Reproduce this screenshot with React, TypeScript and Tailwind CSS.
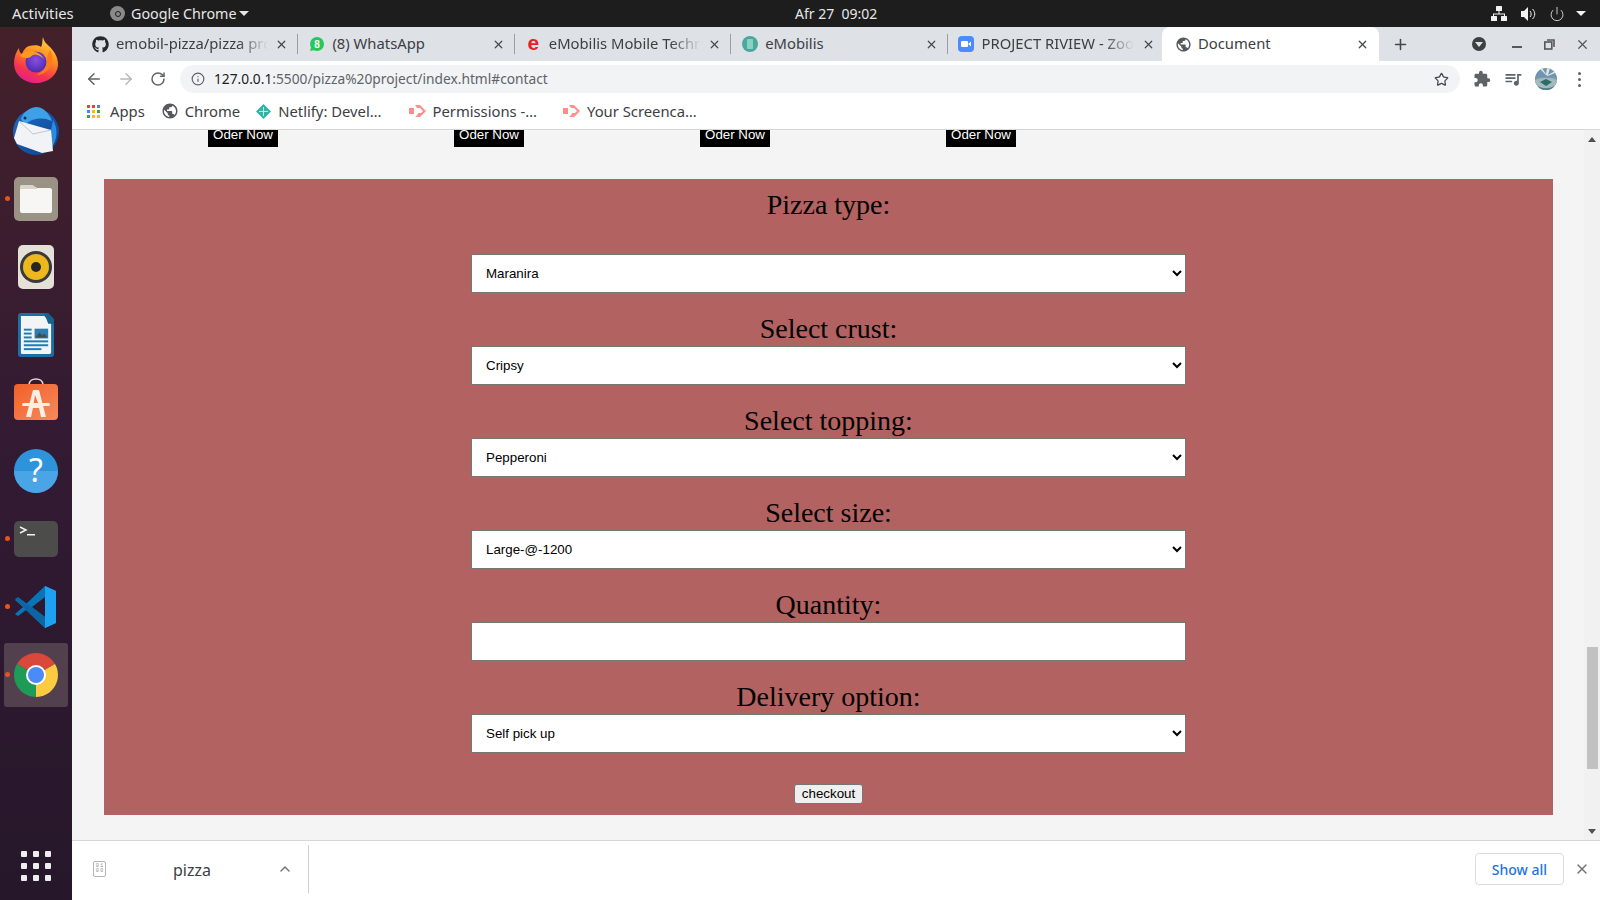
import { ArrowLeft, ArrowRight, RotateCw, Info, Star, Plus, X, ChevronUp, Power } from "lucide-react";
import { FaGithub } from "react-icons/fa";
import { MdExtension, MdPublic, MdQueueMusic } from "react-icons/md";

const ui = "font-['Noto_Sans',sans-serif]";

function FirefoxIcon() {
  return (
    <svg className="-mt-[7px]" width="46" height="48" viewBox="0 0 46 48">
      <defs>
        <linearGradient id="ff" x1="0.7" y1="0" x2="0.3" y2="1">
          <stop offset="0" stopColor="#ffd53d" />
          <stop offset="0.4" stopColor="#ff8a1f" />
          <stop offset="0.75" stopColor="#f5344f" />
          <stop offset="1" stopColor="#e01e8e" />
        </linearGradient>
        <radialGradient id="ffg" cx="0.5" cy="0.4" r="0.6">
          <stop offset="0" stopColor="#8a4fe0" />
          <stop offset="1" stopColor="#4b2bb0" />
        </radialGradient>
      </defs>
      <path d="M30 1c1 5 3 6 7 10 5 5 8 11 8 17 0 11-10 19-22 19S1 39 1 27c0-6 2-11 5-15 0 3 1 5 3 6 1-4 4-7 7-8 5-1 10-1 12 1 2-3 1-7 2-10z" fill="url(#ff)" />
      <circle cx="23" cy="26" r="10.5" fill="url(#ffg)" />
      <path d="M7 20c3-4 8-6 12-5 6 1 10 4 12 8-3-3-7-5-11-4-2 1-3 3-6 3-3 0-5-1-7-2z" fill="#ff9a1f" />
      <path d="M37 14c3 5 3 12 0 17-3 5-8 8-14 8 7-3 11-8 11-14 0-4 1-8 3-11z" fill="#ff7a1a" />
    </svg>
  );
}

function ThunderbirdIcon() {
  return (
    <svg width="48" height="50" viewBox="0 0 48 50">
      <defs>
        <linearGradient id="tb" x1="0" y1="0" x2="1" y2="1">
          <stop offset="0" stopColor="#1f6fc4" />
          <stop offset="1" stopColor="#0a3f8f" />
        </linearGradient>
      </defs>
      <circle cx="24" cy="26" r="23" fill="url(#tb)" />
      <path d="M24 1c-8 1-13 6-15 12l4 6c5-6 16-9 27-4C37 7 31 1 24 1z" fill="#3fa0e8" />
      <path d="M41 14c5 8 5 20-2 28l-7 3c5-7 7-20 9-31z" fill="#2c8adf" />
      <path d="M2 32 7 15 39 24 41 45 30 47 5 38z" fill="#f2f3f6" />
      <path d="M7 15 21 28 39 24" fill="none" stroke="#c3c6cf" strokeWidth="1" />
      <circle cx="13" cy="12" r="1.5" fill="#0d2d5c" />
    </svg>
  );
}

function FilesIcon() {
  return (
    <svg width="44" height="44" viewBox="0 0 44 44">
      <rect width="44" height="44" rx="5" fill="#9a9284" />
      <path d="M6 10c0-1 1-2 2-2h10l5 3h13c1 0 2 1 2 2v21c0 1-1 2-2 2H8c-1 0-2-1-2-2z" fill="#f7f6f4" />
      <path d="M6 13V10c0-1 1-2 2-2h10l5 3 0 1H9c-2 0-3 0-3 1z" fill="#d9d5cd" />
    </svg>
  );
}

function RhythmboxIcon() {
  return (
    <svg width="44" height="44" viewBox="0 0 44 44">
      <rect x="4" y="0" width="36" height="44" rx="5" fill="#e4e1d8" />
      <circle cx="22" cy="22" r="16" fill="#3a3a3a" />
      <circle cx="22" cy="22" r="13" fill="#ecb81e" />
      <circle cx="22" cy="22" r="5" fill="#262626" />
    </svg>
  );
}

function WriterIcon() {
  return (
    <svg width="37" height="45" viewBox="0 0 38 46">
      <path d="M3 0h25l9 9v33c0 2-1 3-3 3H3c-2 0-3-1-3-3V3c0-2 1-3 3-3z" fill="#1b6fa5" />
      <path d="M4 3h23l7 8v29c0 1 0 2-2 2H4c-1 0-1-1-1-2V4c0-1 0-1 1-1z" fill="#f3f4f6" />
      <path d="M27 0h4l6 6v5h-6z" fill="#15628f" />
      <rect x="6" y="16" width="8" height="2" fill="#1b7db8" />
      <rect x="6" y="20" width="8" height="2" fill="#1b7db8" />
      <rect x="6" y="24" width="8" height="2" fill="#1b7db8" />
      <rect x="17" y="16" width="14" height="10" fill="#2a7fb0" />
      <path d="M18 25l4-5 3 3 2-2 3 4z" fill="#4a4a4a" />
      <rect x="6" y="28" width="25" height="2" fill="#1b7db8" />
      <rect x="6" y="32" width="25" height="2" fill="#1b7db8" />
      <rect x="6" y="36" width="18" height="2" fill="#1b7db8" />
    </svg>
  );
}

function StoreIcon() {
  return (
    <svg className="-mt-[8px]" width="44" height="42" viewBox="0 0 44 42">
      <defs>
        <linearGradient id="st" x1="0" y1="0" x2="1" y2="1">
          <stop offset="0" stopColor="#f2602a" />
          <stop offset="1" stopColor="#f58a5c" />
        </linearGradient>
      </defs>
      <path d="M15 7c0-8 14-8 14 0" fill="none" stroke="#eed9c4" strokeWidth="1.6" />
      <rect y="6" width="44" height="36" rx="4" fill="url(#st)" />
      <path d="M19 12h6l7 27h-5l-2-9h-6l-2 9h-5zM21 17l-1.500 9h5z" fill="#fbeee6" />
      <rect x="8" y="25" width="28" height="3" rx="1.500" fill="#fbeee6" />
    </svg>
  );
}

function HelpIcon() {
  return (
    <svg width="44" height="44" viewBox="0 0 44 44">
      <circle cx="22" cy="22" r="22" fill="#2f93dc" />
      <path d="M0 22h44a22 22 0 0 1-44 0z" fill="#4aa5e6" />
      <text x="22" y="33" textAnchor="middle" fontSize="32" fontFamily="Noto Sans, sans-serif" fill="#fff">?</text>
    </svg>
  );
}

function TerminalIcon() {
  return (
    <svg width="44" height="36" viewBox="0 0 44 36">
      <rect width="44" height="36" rx="5" fill="#4c4c4a" />
      <path d="M6 6l6 3-6 3" fill="none" stroke="#f2f2f2" strokeWidth="1.500" />
      <rect x="13" y="13" width="8" height="1.500" fill="#f2f2f2" />
    </svg>
  );
}

function VSCodeIcon() {
  return (
    <svg width="44" height="44" viewBox="0 0 44 44">
      <path d="M31 1 42 6v32l-11 5-19-18-8 6-3-2 8-7-8-7 3-2 8 6z" fill="#0a74b8" />
      <path d="M31 1 42 6v32l-11 5z" fill="#1ea1f1" />
      <path d="M31 12v20l-13-10z" fill="#2d1a2f" />
      <path d="M1 14l3-2 27 20v11L12 25z" fill="#0c66a6" />
    </svg>
  );
}

function ChromeIcon({ size = 44 }: { size?: number }) {
  return (
    <svg width={size} height={size} viewBox="0 0 44 44">
      <path d="M22 22 3 11A22 22 0 0 1 41 11z" fill="#d9483b" />
      <path d="M22 22 41 11A22 22 0 0 1 22 44z" fill="#fdcb42" />
      <path d="M22 22 22 44A22 22 0 0 1 3 11z" fill="#1e9c57" />
      <circle cx="22" cy="22" r="10" fill="#fff" />
      <circle cx="22" cy="22" r="8" fill="#4a8bf5" />
    </svg>
  );
}

function ScreencastIcon() {
  return (
    <svg width="17" height="14" viewBox="0 0 17 14">
      <rect x="0" y="4" width="5" height="6" fill="#ff8a8a" />
      <path d="M6 1h5l6 6-6 6H6l3-3v-1h3l2-2-3-3H8z" fill="#ff8f8f" />
    </svg>
  );
}

function AppsIcon() {
  const colors = ["#ea4335", "#ea4335", "#4285f4", "#4285f4", "#fbbc05", "#34a853", "#34a853", "#fbbc05", "#fbbc05"];
  return (
    <div className="grid grid-cols-3 gap-[2px] w-[13px] shrink-0">
      {colors.map((c, i) => (
        <span key={i} className="w-[3px] h-[3px]" style={{ backgroundColor: c }} />
      ))}
    </div>
  );
}

function Avatar() {
  return (
    <svg className="ml-[12px]" width="22" height="22" viewBox="0 0 22 22">
      <defs>
        <clipPath id="av">
          <circle cx="11" cy="11" r="11" />
        </clipPath>
      </defs>
      <g clipPath="url(#av)">
        <rect width="22" height="22" fill="#6f95b5" />
        <path d="M11 7 4 0h3l4 6 1-6h3l-2 7 7-4v2l-7 3z" fill="#dfe6dc" />
        <rect y="9" width="22" height="13" fill="#7d9aa4" />
        <path d="M0 12c6-3 16-3 22 0v10H0z" fill="#a3b9bf" />
        <path d="M5 14l6-3 6 3-6 4z" fill="#2d6c62" />
        <path d="M3 18c5 3 11 3 16 0v4H3z" fill="#4f7d83" />
      </g>
    </svg>
  );
}

const tabs = [
  { title: "emobil-pizza/pizza pro", icon: <FaGithub size={17} className="text-[#24292e]" />, fade: true, sep: true },
  {
    title: "(8) WhatsApp",
    icon: (
      <svg width="16" height="16" viewBox="0 0 16 16">
        <path d="M8 1a7 7 0 0 1 0 14c-1 0-2-.2-3-.7L1 15l1-3.500A7 7 0 0 1 8 1z" fill="#25c85a" />
        <text x="8" y="11.500" textAnchor="middle" fontSize="10" fontWeight="700" fontFamily="Liberation Sans, sans-serif" fill="#fff">8</text>
      </svg>
    ),
    sep: true,
  },
  {
    title: "eMobilis Mobile Techn",
    icon: <span className="text-[#e8202a] text-[21px] font-bold leading-none font-['Liberation_Sans',sans-serif] -mt-1">e</span>,
    fade: true,
    sep: true,
  },
  {
    title: "eMobilis",
    icon: (
      <svg width="16" height="16" viewBox="0 0 16 16">
        <circle cx="8" cy="8" r="8" fill="#4aa89c" />
        <rect x="5" y="3" width="6" height="10" rx="1" fill="#8ccfc4" />
      </svg>
    ),
    sep: true,
  },
  {
    title: "PROJECT RIVIEW - Zoo",
    icon: (
      <svg width="16" height="16" viewBox="0 0 16 16">
        <rect width="16" height="16" rx="4" fill="#4a8cff" />
        <rect x="3" y="5" width="7" height="6" rx="1" fill="#fff" />
        <path d="M10.500 7.500 13 5.500v5l-2.500-2z" fill="#fff" />
      </svg>
    ),
    fade: true,
  },
];

const dock = [
  { el: <FirefoxIcon />, dot: false },
  { el: <ThunderbirdIcon />, dot: false },
  { el: <FilesIcon />, dot: true },
  { el: <RhythmboxIcon />, dot: false },
  { el: <WriterIcon />, dot: false },
  { el: <StoreIcon />, dot: false },
  { el: <HelpIcon />, dot: false },
  { el: <TerminalIcon />, dot: true },
  { el: <VSCodeIcon />, dot: true },
  { el: <ChromeIcon />, dot: true, active: true },
];

const bookmarks = [
  { label: "Netlify: Devel…", gap: "ml-[16px]", text: "ml-[7px]" },
  { label: "Permissions -…", gap: "ml-[28px]", text: "ml-[6px]" },
  { label: "Your Screenca…", gap: "ml-[26px]", text: "ml-[7px]" },
];

const fields = [
  { label: "Pizza type:", value: "Maranira", first: true },
  { label: "Select crust:", value: "Cripsy" },
  { label: "Select topping:", value: "Pepperoni" },
  { label: "Select size:", value: "Large-@-1200" },
  { label: "Quantity:", input: true },
  { label: "Delivery option:", value: "Self pick up" },
];

export default function App() {
  return (
    <div className={`w-[1600px] h-[900px] flex flex-col overflow-hidden bg-white ${ui}`}>
      {/* gnome top bar */}
      <div className="h-[27px] shrink-0 bg-[#1d1d1d] text-[#e6e6e6] text-[14px] flex items-center pl-3">
        <span className="w-[98px] text-[14.800px]">Activities</span>
        <span className="w-[15px] h-[15px] rounded-full bg-[#8a8a8a] flex items-center justify-center">
          <span className="w-[6px] h-[6px] rounded-full border border-[#1d1d1d]" />
        </span>
        <span className="ml-[6px] w-[108px] whitespace-nowrap text-[14.300px]">Google Chrome</span>
        <span className="w-0 h-0 border-x-[5px] border-x-transparent border-t-[5px] border-t-[#e6e6e6]" />
        <span className="ml-[546px] whitespace-pre">Afr 27  09:02</span>
        <div className="ml-auto flex items-center pr-[14px]">
          <svg width="16" height="15" viewBox="0 0 16 15" fill="#f2f2f2">
            <rect x="5" y="0" width="6" height="5" rx="0.5" />
            <rect x="0" y="10" width="6" height="5" rx="0.5" />
            <rect x="10" y="10" width="6" height="5" rx="0.5" />
            <path d="M7.500 5h1v2.500H14V10h-1V8.500H3V10H2V7.500h5.500z" />
          </svg>
          <svg className="ml-[14px]" width="16" height="14" viewBox="0 0 16 14" fill="#f2f2f2">
            <path d="M0 4h3l4-4v14l-4-4H0z" />
            <path d="M9 4c1.500 1.500 1.500 4.500 0 6M11.500 2c3 3 3 7 0 10" fill="none" stroke="#f2f2f2" strokeWidth="1" />
          </svg>
          <Power className="ml-[12px] text-[#f2f2f2]" size={16} strokeWidth={1.2} />
          <span className="ml-[11px] w-0 h-0 border-x-[5px] border-x-transparent border-t-[5px] border-t-[#f2f2f2]" />
        </div>
      </div>

      <div className="flex-1 flex min-h-0">
        {/* dock */}
        <div className="w-[72px] shrink-0 bg-linear-to-b from-[#44202a] via-[#321a33] to-[#26172a] flex flex-col items-center relative pt-[4px]">
          {dock.map((d, i) => (
            <div
              key={i}
              className={`relative w-[64px] h-[64px] mb-[4px] rounded-[3px] flex items-center justify-center ${d.active ? "bg-[#52404e]" : ""}`}
            >
              {d.el}
              {d.dot && <span className="absolute left-[1px] top-[29px] w-[5px] h-[5px] rounded-full bg-[#e9541e]" />}
            </div>
          ))}
          <div className="mt-auto mb-[19px] grid grid-cols-3 gap-[6px]">
            {Array.from({ length: 9 }).map((_, i) => (
              <span key={i} className="w-[6px] h-[6px] rounded-[1px] bg-[#eeeeee]" />
            ))}
          </div>
        </div>

        <div className="flex-1 flex flex-col min-w-0">
          {/* tab strip */}
          <div className="h-[34px] shrink-0 bg-[#dee1e6] flex items-center pl-[10px] text-[#3c4043] text-[14.800px]">
            {tabs.map((t) => (
              <div key={t.title} className="w-[216.400px] h-full shrink-0 flex items-center pl-[10px] relative">
                <span className="w-[17px] flex justify-center shrink-0">{t.icon}</span>
                <span
                  className={`ml-[7px] -mt-[2px] w-[152px] overflow-hidden whitespace-nowrap ${t.fade ? "[mask-image:linear-gradient(to_right,black_80%,transparent)]" : ""}`}
                >
                  {t.title}
                </span>
                <X size={13} strokeWidth={2.2} className="ml-auto mr-[9px] text-[#45484c]" />
                {t.sep && <span className="w-px h-[20px] bg-[#9a9da1]" />}
              </div>
            ))}
            <div className="-ml-[2px] w-[217px] h-full shrink-0 bg-white rounded-t-[8px] flex items-center pl-[13px]">
              <MdPublic size={17} className="text-[#55595e]" />
              <span className="ml-[6px] -mt-[2px]">Document</span>
              <X size={13} strokeWidth={2.2} className="ml-auto mr-[10px] text-[#45484c]" />
            </div>
            <Plus size={17} strokeWidth={2.2} className="ml-[13px] text-[#45484c]" />
            <div className="ml-[63px] w-[14px] h-[14px] rounded-full bg-[#3c4043] flex items-center justify-center">
              <span className="w-0 h-0 border-x-[4px] border-x-transparent border-t-[5px] border-t-[#dee1e6]" />
            </div>
            <span className="ml-[26px] w-[10px] h-[2px] bg-[#55585c] mt-[6px]" />
            <svg className="ml-[22px]" width="11" height="11" viewBox="0 0 11 11" fill="none" stroke="#55585c" strokeWidth="1.600">
              <rect x="0.800" y="3" width="7" height="7" />
              <path d="M3 1h7v7" />
            </svg>
            <X size={15} strokeWidth={2} className="ml-[20px] text-[#55585c]" />
          </div>

          {/* toolbar */}
          <div className="h-[36px] shrink-0 bg-white flex items-center text-[#5f6368]">
            <ArrowLeft size={18} strokeWidth={2} className="ml-[13px]" />
            <ArrowRight size={18} strokeWidth={2} className="ml-[14px] text-[#b6b8bb]" />
            <RotateCw size={16} strokeWidth={2.2} className="ml-[15px]" />
            <div className="ml-[14px] w-[1280px] h-[28px] rounded-full bg-[#f1f3f4] flex items-center pl-[11px] pr-[11px] text-[13.750px]">
              <Info size={14} strokeWidth={2} />
              <span className="ml-[9px] whitespace-nowrap">
                <span className="text-[#202124]">127.0.0.1</span>:5500/pizza%20project/index.html#contact
              </span>
              <Star size={15} strokeWidth={2} className="ml-auto text-[#45484c]" />
            </div>
            <MdExtension size={18} className="ml-[13px]" />
            <MdQueueMusic size={20} className="ml-[12px]" />
            <Avatar />
            <div className="ml-[21px] flex flex-col gap-[3px]">
              <span className="w-[3px] h-[3px] rounded-full bg-[#5f6368]" />
              <span className="w-[3px] h-[3px] rounded-full bg-[#5f6368]" />
              <span className="w-[3px] h-[3px] rounded-full bg-[#5f6368]" />
            </div>
          </div>

          {/* bookmarks */}
          <div className="h-[33px] shrink-0 bg-white border-b border-[#d6d6d6] flex items-center pl-[15px] pb-[4px] text-[14.800px] text-[#3c4043]">
            <AppsIcon />
            <span className="ml-[10px]">Apps</span>
            <MdPublic size={18} className="ml-[16px] text-[#55595e]" />
            <span className="ml-[6px]">Chrome</span>
            {bookmarks.map((b, i) => (
              <div key={b.label} className={`flex items-center ${b.gap}`}>
                {i === 0 ? (
                  <svg width="15" height="15" viewBox="0 0 15 15">
                    <path d="M7.500 0 15 7.500 7.500 15 0 7.500z" fill="#30b5a5" />
                    <path d="M7.500 3v9M3 7.500h9" stroke="#bfeae3" strokeWidth="1" />
                  </svg>
                ) : (
                  <ScreencastIcon />
                )}
                <span className={`${b.text} whitespace-nowrap`}>{b.label}</span>
              </div>
            ))}
          </div>

          {/* page */}
          <div className="flex-1 min-h-0 bg-[#f4f4f4] flex overflow-hidden">
            <div className="flex-1 min-w-0 pl-8">
              <div className="flex pl-[104px] gap-[176px] h-[17px] overflow-hidden font-['Liberation_Sans',sans-serif]">
                {[0, 1, 2, 3].map((n) => (
                  <div key={n} className="w-[70px] h-[17px] bg-black text-white text-[13.300px] leading-[10px] text-center overflow-hidden">
                    Oder Now
                  </div>
                ))}
              </div>
              <div className="mt-[32px] w-[1449px] h-[636px] bg-[#b36262] flex flex-col items-center font-['Liberation_Serif',serif] text-black">
                {fields.map((f) => (
                  <div key={f.label} className="flex flex-col items-center">
                    <div className={`text-[28px] leading-[33px] ${f.first ? "mt-[9px] mb-[33px]" : "mt-[19px] mb-[1px]"}`}>
                      {f.label}
                    </div>
                    {f.input ? (
                      <input className="w-[715px] h-[39px] bg-white border border-[#767676] px-[14px] text-[13.300px]" />
                    ) : (
                      <select
                        defaultValue={f.value}
                        className="w-[715px] h-[39px] bg-white border border-[#767676] pl-[10px] pr-[4px] text-[13.330px] font-['Liberation_Sans',sans-serif]"
                      >
                        <option>{f.value}</option>
                      </select>
                    )}
                  </div>
                ))}
                <button className="mt-[31px] w-[69px] h-[20px] bg-[#efefef] border border-[#767676] rounded-[3px] text-[13.330px] leading-none font-['Liberation_Sans',sans-serif]">
                  checkout
                </button>
              </div>
            </div>
            {/* scrollbar */}
            <div className="w-[16px] shrink-0 bg-[#f1f1f1] flex flex-col items-center relative">
              <span className="mt-[7px] w-0 h-0 border-x-[4px] border-x-transparent border-b-[5px] border-b-[#505050]" />
              <span className="mt-[505px] w-[11px] h-[122px] bg-[#c1c1c1]" />
              <span className="mt-auto mb-[6px] w-0 h-0 border-x-[4px] border-x-transparent border-t-[5px] border-t-[#505050]" />
            </div>
          </div>

          {/* download shelf */}
          <div className="h-[60px] shrink-0 bg-white border-t border-[#d6d6d6] flex items-center pb-[3px] text-[#3c4043] text-[16px]">
            <div className="ml-[21px] w-[13px] h-[16px] border border-[#b4b4b4] rounded-[2px] grid grid-cols-2 place-items-center text-[5px] leading-none text-[#8a8a8a] font-['Liberation_Mono',monospace] px-[1px] py-[2px]">
              <span>0</span>
              <span>1</span>
              <span>0</span>
              <span>0</span>
            </div>
            <span className="ml-[67px] mt-[2px]">pizza</span>
            <ChevronUp size={16} strokeWidth={2} className="ml-[66px] text-[#6d6f72]" />
            <span className="ml-[15px] w-px h-[48px] bg-[#cfcfcf]" />
            <button className="ml-auto w-[89px] h-[32px] border border-[#dadce0] rounded-[4px] text-[14px] font-medium text-[#1a73e8]">
              Show all
            </button>
            <X size={16} strokeWidth={2} className="ml-[10px] mr-[10px] text-[#6d6f72]" />
          </div>
        </div>
      </div>
    </div>
  );
}
